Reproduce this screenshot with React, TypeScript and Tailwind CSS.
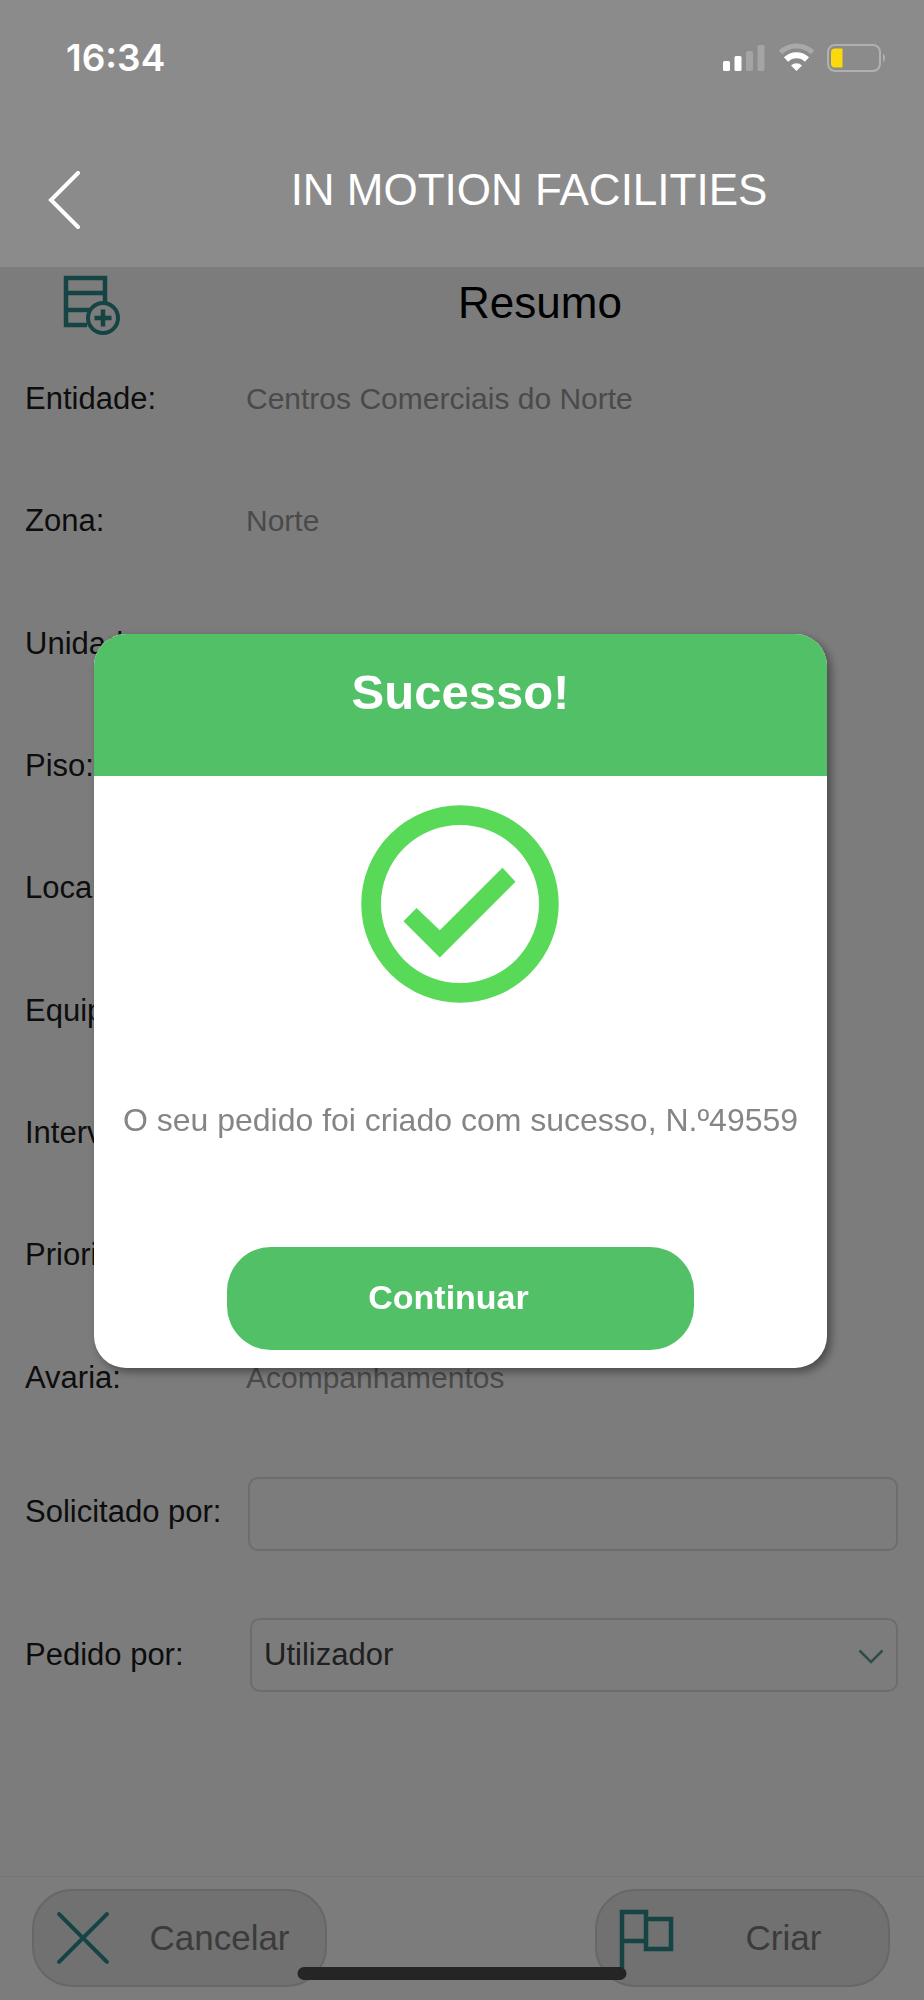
import React, { useState } from "react";

interface SummaryField {
  label: string;
  value: string;
}

const fields: SummaryField[] = [
  { label: "Entidade:", value: "Centros Comerciais do Norte" },
  { label: "Zona:", value: "Norte" },
  { label: "Unidade:", value: "" },
  { label: "Piso:", value: "" },
  { label: "Local:", value: "" },
  { label: "Equip.:", value: "" },
  { label: "Interv.:", value: "" },
  { label: "Prioridade:", value: "" },
  { label: "Avaria:", value: "Acompanhamentos" },
];

const StatusBar: React.FC = () => (
  <div className="flex h-[116px] items-center justify-between pl-[66px] pr-9">
    <span className="font-['Inter',sans-serif] text-[37px] font-semibold leading-10">16:34</span>
    <svg width="166" height="30" viewBox="0 0 166 30" fill="none" aria-hidden="true">
      {/* signal */}
      <rect x="1" y="18" width="7" height="10" rx="1.5" fill="#fff" />
      <rect x="12.500" y="13" width="7" height="15" rx="1.5" fill="#fff" />
      <rect x="24" y="8" width="7" height="20" rx="1.5" fill="#a4a4a4" />
      <rect x="35.500" y="2" width="7" height="26" rx="1.500" fill="#a4a4a4" />
      {/* wifi */}
      <path d="M58.500 9.500a23 23 0 0 1 32 0" stroke="#a9a9a9" strokeWidth="5" />
      <path d="M64 16.500a15 15 0 0 1 21 0" stroke="#fff" strokeWidth="6" />
      <path d="M74.500 28l-5.500-5.500a8 8 0 0 1 11 0z" fill="#fff" />
      {/* battery */}
      <rect x="106" y="2" width="52" height="26" rx="7" stroke="#b0b0b0" strokeWidth="2" />
      <path d="M161 10.500a6 6 0 0 1 0 9z" fill="#b0b0b0" />
      <path d="M113 5.500h7.500v19H113a4 4 0 0 1-4-4v-11a4 4 0 0 1 4-4z" fill="#fcd90a" />
    </svg>
  </div>
);

const SuccessDialog: React.FC<{ onClose: () => void }> = ({ onClose }) => (
  <div className="fixed inset-0 flex items-center justify-center pl-[94px] pr-[97px] pt-0.5">
    <div
      role="dialog"
      aria-modal="true"
      aria-labelledby="dialog-title"
      className="w-full overflow-hidden rounded-[32px] bg-white shadow-[4px_4px_8px_rgba(0,0,0,0.4)]"
    >
      <div className="h-[142px] bg-[#52c066] pt-7 text-center text-white">
        <h2 id="dialog-title" className="text-[49px] font-bold leading-[60px]">
          Sucesso!
        </h2>
      </div>
      <div className="flex flex-col items-center pb-[18px] pt-[29px]">
        <svg width="200" height="198" viewBox="-1 0 198 196" fill="none" aria-hidden="true">
          <circle cx="97" cy="98" r="88" stroke="#58da58" strokeWidth="19.500" />
          <path d="M41 115L54 102L77 124L139 62L152 76L77 151Z" fill="#58da58" />
        </svg>
        <p className="mt-[97px] text-center text-[32px] leading-10 text-[#858585]">
          O seu pedido foi criado com sucesso, N.º49559
        </p>
        <button
          onClick={onClose}
          className="mt-[107px] h-[103px] w-[467px] rounded-[44px] bg-[#52c066] pb-1 pr-6 text-[34px] font-bold leading-10 text-white"
        >
          Continuar
        </button>
      </div>
    </div>
  </div>
);

const App: React.FC = () => {
  const [showDialog, setShowDialog] = useState<boolean>(true);
  const [requestedBy, setRequestedBy] = useState<string>("");

  return (
    <div className="flex min-h-screen flex-col bg-[#7c7c7c] font-['Liberation_Sans',Arial,sans-serif] text-[31px] leading-9 text-[#0d0d0d]">
      {/* Header */}
      <header className="bg-[#8b8b8b] text-white">
        <StatusBar />
        <div className="flex h-[151px] items-center">
          <button aria-label="Voltar" className="w-[134px] pl-12 pt-4">
            <svg width="34" height="58" viewBox="0 0 34 58" fill="none">
              <path d="M30 2L3 29L30 56" stroke="#fff" strokeWidth="4" strokeLinecap="round" />
            </svg>
          </button>
          <h1 className="flex-1 pb-1 text-center text-[44px] leading-[52px]">IN MOTION FACILITIES</h1>
        </div>
      </header>

      <main>
        <div className="flex h-[71px] items-center text-black">
          <div className="w-[156px] pl-[63px] pt-1.5">
            <svg width="58" height="62" viewBox="0 0 58 62" fill="none" stroke="#164444" strokeWidth="4.500">
              <path d="M24 50H3V3H42V27M3 18H42M3 35H26" />
              <circle cx="40" cy="43" r="15" strokeWidth="4" />
              <path d="M40 34.500V51.500M31.500 43H48.500" />
            </svg>
          </div>
          <h2 className="flex-1 text-center text-[44px] leading-[52px]">Resumo</h2>
        </div>

        {/* Request summary */}
        <dl className="grid min-h-[1101px] auto-rows-fr pl-[25px] pr-6">
          {fields.map((field) => (
            <div key={field.label} className="grid grid-cols-[221px_1fr] items-center">
              <dt>{field.label}</dt>
              <dd className="text-[30px] text-[#4a4a4a]">{field.value}</dd>
            </div>
          ))}
        </dl>

        <form className="flex flex-col gap-[67px] pb-10 pl-[25px] pr-[26px] pt-[38px]">
          <div className="grid grid-cols-[221px_1fr] items-center">
            <label htmlFor="requestedBy" className="pb-1">
              Solicitado por:
            </label>
            <div className="pl-0.5">
              <input
                id="requestedBy"
                type="text"
                value={requestedBy}
                onChange={(e) => setRequestedBy(e.target.value)}
                className="block h-[74px] w-full rounded-[10px] border-2 border-[#6d6d6d] px-2.5 outline-none"
              />
            </div>
          </div>
          <div className="grid grid-cols-[221px_1fr] items-center">
            <label htmlFor="orderedBy">Pedido por:</label>
            <div className="relative pl-1">
              <select
                id="orderedBy"
                className="block h-[74px] w-full appearance-none rounded-[10px] border-2 border-[#6d6d6d] px-3 text-[#202020] outline-none"
              >
                <option>Utilizador</option>
              </select>
              <svg
                width="26"
                height="16"
                viewBox="0 0 26 16"
                fill="none"
                className="pointer-events-none absolute right-3.5 top-[31px]"
              >
                <path d="M1.500 1.500L13 13L24.500 1.500" stroke="#2f4d4b" strokeWidth="2.500" />
              </svg>
            </div>
          </div>
        </form>
      </main>

      {/* Actions */}
      <footer className="relative mt-auto flex h-[124px] items-start justify-between border-t border-[#757575] pl-8 pr-[34px] pt-3 text-[35px] text-[#3b3b3b]">
        <button className="flex h-[98px] w-[295px] items-center rounded-[40px] border-2 border-[#676767] bg-[#717171] pl-[22px]">
          <svg width="54" height="54" viewBox="0 0 52 52" fill="none">
            <path d="M3 3L49 49M49 3L3 49" stroke="#164444" strokeWidth="4" strokeLinecap="round" />
          </svg>
          <span className="flex-1 pl-1 text-center">Cancelar</span>
        </button>
        <button className="flex h-[98px] w-[295px] items-center rounded-[40px] border-2 border-[#676767] bg-[#717171] pl-[22px]">
          <svg width="56" height="60" viewBox="0 0 56 60" fill="none">
            <path d="M3 60V4H27V33H3M27 11H52V41H27V33" stroke="#164444" strokeWidth="4.500" />
          </svg>
          <span className="flex-1 pl-1 text-center">Criar</span>
        </button>
        {/* home indicator */}
        <div className="absolute bottom-5 left-1/2 h-[13px] w-[329px] -translate-x-1/2 rounded-full bg-[#252525]" />
      </footer>

      {showDialog && <SuccessDialog onClose={() => setShowDialog(false)} />}
    </div>
  );
};

export default App;
